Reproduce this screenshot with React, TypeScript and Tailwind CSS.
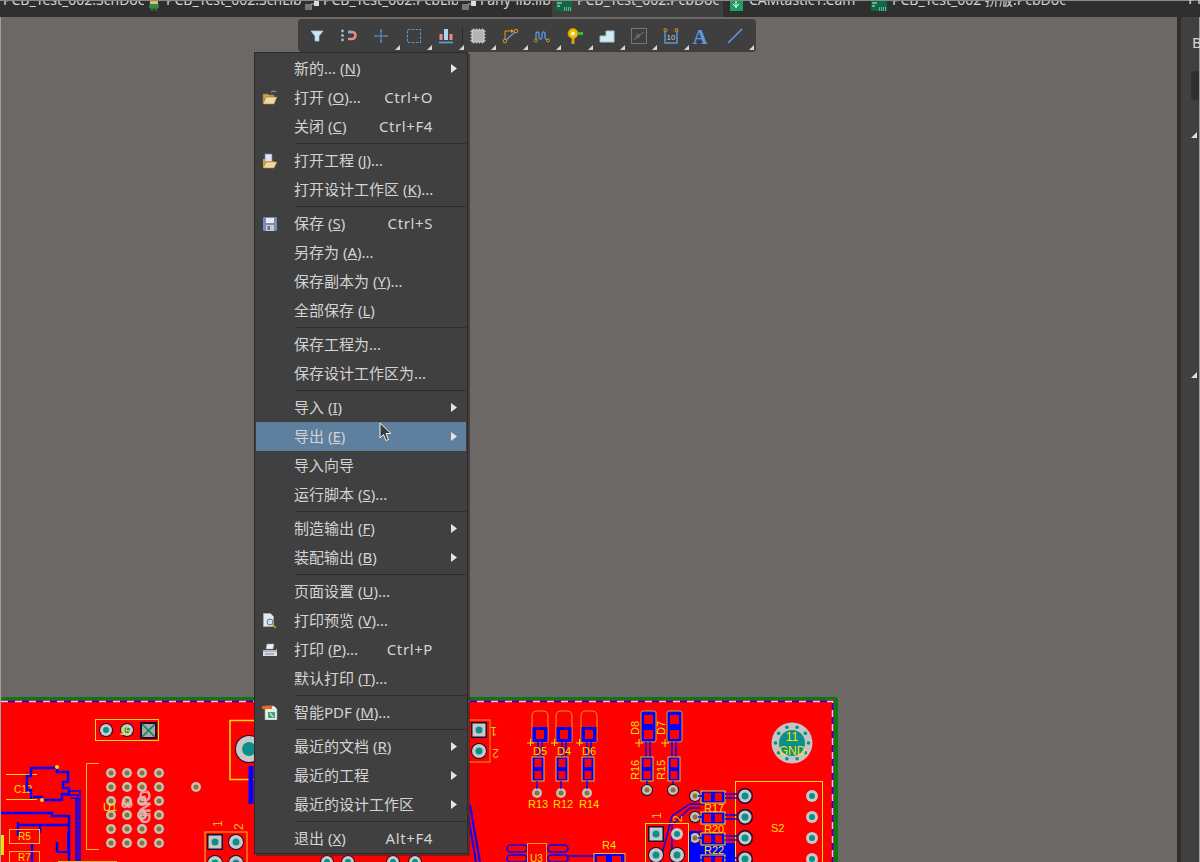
const tabs = [
  { label: "PCB_Test_002.SchDoc", box: "w-[144px] pl-[3px]", iconBox: "", icon: null },
  { label: "PCB_Test_002.SchLib", box: "w-[157px] pl-[4px]", iconBox: "w-[18px]", icon: "sch" },
  { label: "PCB_Test_002.PcbLib", box: "w-[157px] pl-[4px]", iconBox: "w-[18px]", icon: "lib" },
  { label: "Fany-lib.lib", box: "w-[94px] pl-[4px]", iconBox: "w-[18px]", icon: "lib" },
  { label: "PCB_Test_002.PcbDoc", box: "w-[171px] pl-[4px] bg-[#3f3f3f]", iconBox: "w-[21px]", icon: "pcb" },
  { label: "CAMtastic1.Cam", box: "w-[144px] pl-[7px]", iconBox: "w-[19px]", icon: "cam" },
  { label: "PCB_Test_002 拼版.PcbDoc", box: "w-[300px] pl-[4px]", iconBox: "w-[21px]", icon: "pcb" },
];

type MenuRow = {
  label: string;
  key?: string;
  tail?: string;
  shortcut?: string;
  arrow?: boolean;
  icon?: string;
  hover?: boolean;
};

const menuGroups: MenuRow[][] = [
  [
    { label: "新的... (", key: "N", tail: ")", arrow: true },
    { label: "打开 (", key: "O", tail: ")...", shortcut: "Ctrl+O", icon: "open" },
    { label: "关闭 (", key: "C", tail: ")", shortcut: "Ctrl+F4" },
  ],
  [
    { label: "打开工程 (", key: "J", tail: ")...", icon: "project" },
    { label: "打开设计工作区 (", key: "K", tail: ")..." },
  ],
  [
    { label: "保存 (", key: "S", tail: ")", shortcut: "Ctrl+S", icon: "save" },
    { label: "另存为 (", key: "A", tail: ")..." },
    { label: "保存副本为 (", key: "Y", tail: ")..." },
    { label: "全部保存 (", key: "L", tail: ")" },
  ],
  [{ label: "保存工程为..." }, { label: "保存设计工作区为..." }],
  [
    { label: "导入 (", key: "I", tail: ")", arrow: true },
    { label: "导出 (", key: "E", tail: ")", arrow: true, hover: true },
    { label: "导入向导" },
    { label: "运行脚本 (", key: "S", tail: ")..." },
  ],
  [
    { label: "制造输出 (", key: "F", tail: ")", arrow: true },
    { label: "装配输出 (", key: "B", tail: ")", arrow: true },
  ],
  [
    { label: "页面设置 (", key: "U", tail: ")..." },
    { label: "打印预览 (", key: "V", tail: ")...", icon: "preview" },
    { label: "打印 (", key: "P", tail: ")...", shortcut: "Ctrl+P", icon: "print" },
    { label: "默认打印 (", key: "T", tail: ")..." },
  ],
  [{ label: "智能PDF (", key: "M", tail: ")...", icon: "pdf" }],
  [
    { label: "最近的文档 (", key: "R", tail: ")", arrow: true },
    { label: "最近的工程", arrow: true },
    { label: "最近的设计工作区", arrow: true },
  ],
  [{ label: "退出 (", key: "X", tail: ")", shortcut: "Alt+F4" }],
];

function TabIcon({ kind }: { kind: string }) {
  if (kind === "sch") {
    return (
      <svg width="12" height="10" viewBox="0 0 12 10">
        <rect x="2" y="0" width="8" height="3" fill="#d8c070" />
        <rect x="2" y="3" width="8" height="5" fill="#2f7a3a" />
        <path d="M1 4h10M1 6h10M4 8v2M8 8v2" stroke="#3f9a4a" />
      </svg>
    );
  }
  if (kind === "lib") {
    return (
      <svg width="15" height="10" viewBox="0 0 15 10">
        <rect x="0" y="3" width="7" height="6" fill="#777" />
        <rect x="9" y="0" width="5" height="5" fill="#ddd" />
        <path d="M6 3h4" stroke="#bbb" />
      </svg>
    );
  }
  if (kind === "cam") {
    return (
      <svg width="13" height="10" viewBox="0 0 13 10">
        <rect width="13" height="10" fill="#1fa060" />
        <path d="M6 0v7M3 3l3 3 3-3" stroke="#fff" fill="none" />
      </svg>
    );
  }
  return (
    <svg width="16" height="10" viewBox="0 0 16 10">
      <rect width="16" height="10" fill="#0d6a45" />
      <path d="M1 2h5M1 5h3M8 7h1M10 7h1M12 7h1M14 7h1M8 9h1M10 9h1M12 9h1M14 9h1" stroke="#d8f0e0" />
    </svg>
  );
}

function Corner() {
  return (
    <svg className="absolute bottom-[2px] right-[-2px]" width="5" height="5" viewBox="0 0 5 5">
      <path d="M5 0V5H0Z" fill="#d8d8d8" />
    </svg>
  );
}

const blue = "#5b9ade";

const toolIcons = [
  {
    corner: false,
    svg: <path d="M2 3h12l-4 5v5H6V8Z" fill="#cfe4f4" stroke="#9cc2de" strokeWidth="0.8" />,
  },
  {
    corner: false,
    svg: (
      <>
        <path d="M7 4h4a3.500 3.500 0 0 1 0 7H7" fill="none" stroke="#e88890" strokeWidth="2.600" />
        <path d="M7 4h4" stroke="#7ab0e0" strokeWidth="2.600" />
        <circle cx="1.500" cy="3" r="1.400" fill="#9fb8cc" />
        <circle cx="1.500" cy="7.500" r="1.400" fill="#9fb8cc" />
        <circle cx="1.500" cy="12" r="1.400" fill="#9fb8cc" />
      </>
    ),
  },
  {
    corner: true,
    svg: (
      <>
        <path d="M8 1v14M1 8h14" stroke={blue} strokeWidth="1" />
        <path d="M7 3h2M7 13h2M3 7v2M13 7v2" stroke={blue} strokeWidth="0.800" />
      </>
    ),
  },
  {
    corner: true,
    svg: <rect x="1.500" y="1.500" width="13" height="13" fill="none" stroke={blue} strokeWidth="1.100" strokeDasharray="2.500 1.500" />,
  },
  {
    corner: true,
    svg: (
      <>
        <rect x="1.500" y="6" width="3" height="6" fill="#e88890" />
        <rect x="6" y="1" width="4" height="11" fill="#a9d6ee" />
        <rect x="11.500" y="6" width="3" height="6" fill="#e88890" />
        <path d="M1 14.500h14" stroke={blue} strokeWidth="1.800" />
      </>
    ),
  },
  {
    corner: true,
    svg: (
      <>
        <path d="M0 3.500h16M0 6.500h16M0 9.500h16M0 12.500h16M3.500 0v16M6.500 0v16M9.500 0v16M12.500 0v16" stroke="#88b4c8" strokeWidth="0.800" />
        <rect x="2" y="2" width="12" height="12" fill="#b4b4b4" stroke="#dcdcdc" />
      </>
    ),
  },
  {
    corner: true,
    svg: (
      <>
        <path d="M3 11V3h6" fill="none" stroke="#e0a020" />
        <path d="M9 1l3 2-3 2Z" fill="#e0a020" />
        <path d="M4 12L13 4" stroke={blue} strokeWidth="1.400" />
        <circle cx="3" cy="13" r="1.800" fill="none" stroke="#d89a20" />
        <circle cx="14" cy="3" r="1.800" fill="none" stroke="#d89a20" />
      </>
    ),
  },
  {
    corner: true,
    svg: (
      <>
        <path d="M2 11V6q0-2 1.500-2T5 6v4q0 1 1.500 1T8 10V6q0-2 1.500-2T11 6v4q0 1 2 2" fill="none" stroke={blue} strokeWidth="1.300" />
        <circle cx="1.800" cy="12.500" r="1.500" fill="none" stroke="#d89a20" />
        <circle cx="14" cy="12.500" r="1.500" fill="none" stroke="#d89a20" />
      </>
    ),
  },
  {
    corner: true,
    svg: (
      <>
        <circle cx="6" cy="5.500" r="5" fill="#f0c000" stroke="#c89000" strokeWidth="0.800" />
        <circle cx="6" cy="5.500" r="1.800" fill="#fff" />
        <rect x="4.500" y="10" width="3" height="6" fill="#e0a010" />
        <rect x="10.500" y="4" width="5.500" height="3" fill="#40b040" />
      </>
    ),
  },
  {
    corner: true,
    svg: <path d="M1 8h6V3h8v11H1Z" fill="#d4e8f0" stroke="#9fc6dc" />,
  },
  {
    corner: true,
    svg: (
      <>
        <rect x="0.500" y="0.500" width="15" height="15" fill="none" stroke="#777" />
        <path d="M3 12l3-3M6 9l4-3M10 6l3-2" stroke="#666" strokeWidth="1.200" />
        <circle cx="7" cy="8" r="1.500" fill="none" stroke="#777" />
      </>
    ),
  },
  {
    corner: true,
    svg: (
      <>
        <path d="M2 3v12h12V3" fill="none" stroke={blue} strokeWidth="1.400" />
        <circle cx="2.500" cy="2" r="1.500" fill="none" stroke="#d89a20" />
        <circle cx="13.500" cy="2" r="1.500" fill="none" stroke="#d89a20" />
        <text x="3.500" y="12" fontSize="8" fill="#c8c8c8" fontFamily="Liberation Sans, sans-serif">10</text>
      </>
    ),
  },
  {
    corner: false,
    svg: (
      <text x="-2.500" y="15.500" fontSize="21" fontWeight="700" fill={blue} fontFamily="Liberation Serif, serif">A</text>
    ),
  },
  {
    corner: true,
    svg: <path d="M0 15L14 1" stroke={blue} strokeWidth="1.600" />,
  },
];

function MenuIcon({ kind }: { kind: string }) {
  if (kind === "open") {
    return (
      <svg width="16" height="15" viewBox="0 0 16 15">
        <path d="M1 4h5l1 1h5v2H4L1 14Z" fill="#caa45a" stroke="#8a6a30" strokeWidth="0.600" />
        <path d="M4 7h11l-3 7H1Z" fill="#f0d9a0" stroke="#a88040" strokeWidth="0.600" />
        <path d="M9 2q3-2 5 0" fill="none" stroke="#9ab" />
      </svg>
    );
  }
  if (kind === "project") {
    return (
      <svg width="16" height="16" viewBox="0 0 16 16">
        <rect x="3" y="1" width="7" height="8" fill="#dfe6f0" stroke="#6f85a5" strokeWidth="0.700" />
        <path d="M1 6h2v2h9v1H4L1 15Z" fill="#caa45a" />
        <path d="M4 9h11l-3 6H1Z" fill="#f0d9a0" stroke="#a88040" strokeWidth="0.600" />
      </svg>
    );
  }
  if (kind === "save") {
    return (
      <svg width="14" height="14" viewBox="0 0 14 14">
        <rect width="14" height="14" rx="1" fill="#7c88b8" />
        <rect x="3" y="1" width="8" height="5" fill="#e8eaf2" />
        <rect x="3" y="8" width="8" height="6" fill="#c4c8d8" />
        <rect x="4.500" y="9" width="2.500" height="4" fill="#6a7098" />
      </svg>
    );
  }
  if (kind === "preview") {
    return (
      <svg width="14" height="16" viewBox="0 0 14 16">
        <path d="M0.500 0.500h7l3 3v10h-10Z" fill="#e4e8ee" stroke="#a8b0bc" strokeWidth="0.700" />
        <circle cx="7" cy="9" r="3" fill="#cfe0ee" stroke="#5a7080" />
        <path d="M9 11l4 4" stroke="#c09840" strokeWidth="1.600" />
      </svg>
    );
  }
  if (kind === "print") {
    return (
      <svg width="16" height="14" viewBox="0 0 16 14">
        <path d="M5 1h7l-1 5H4Z" fill="#eef0f4" stroke="#9aa" strokeWidth="0.500" />
        <path d="M1 7h13l1-2v6H1Z" fill="#aeb6c4" />
        <rect x="1" y="9" width="14" height="4" fill="#d8dce4" />
        <path d="M3 11h9" stroke="#7a8494" />
      </svg>
    );
  }
  return (
    <svg width="16" height="15" viewBox="0 0 16 15">
      <path d="M3 1h9l3 3v11H3Z" fill="#e6ece8" stroke="#9aa8a0" strokeWidth="0.600" />
      <path d="M6 7h7v6H6Z" fill="#3ca878" />
      <path d="M8 8l3 4" stroke="#e6f4ec" strokeWidth="1.200" />
      <rect x="0" y="1" width="10" height="3" fill="#e86a20" />
    </svg>
  );
}

function MenuItem({ row }: { row: MenuRow }) {
  return (
    <div className={`relative flex h-[29px] items-center pl-[38px] pr-[33px] ${row.hover ? "bg-[#5f7f9f]" : ""}`}>
      {row.icon && (
        <span className="absolute left-[5px] top-0 flex h-full w-[18px] items-center justify-center">
          <MenuIcon kind={row.icon} />
        </span>
      )}
      <span className="whitespace-pre">
        {row.label}
        {row.key && <u>{row.key}</u>}
        {row.tail}
      </span>
      {row.shortcut && <span className="ml-auto tracking-[0.6px]">{row.shortcut}</span>}
      {row.arrow && (
        <svg className="absolute left-[195px] top-[10px]" width="6" height="9" viewBox="0 0 6 9">
          <path d="M0 0l6 4.500L0 9Z" fill="#e4e4e4" />
        </svg>
      )}
    </div>
  );
}

function Pad({ x, y, r = 6 }: { x: number; y: number; r?: number }) {
  return (
    <g>
      <circle cx={x} cy={y} r={r + 1} fill="#1a0a30" />
      <circle cx={x} cy={y} r={r} fill="#c8c8c8" />
      <circle cx={x} cy={y} r={r * 0.5} fill="#0a9088" />
    </g>
  );
}

function SquarePad({ x, y }: { x: number; y: number }) {
  return (
    <g>
      <rect x={x - 8} y={y - 8} width="16" height="16" fill="#1a0a30" />
      <rect x={x - 6.500} y={y - 6.500} width="13" height="13" fill="#c8c8c8" />
      <circle cx={x} cy={y} r="3.500" fill="#0a9088" />
    </g>
  );
}

function Hole({ x, y }: { x: number; y: number }) {
  return (
    <g>
      <circle cx={x} cy={y} r="5" fill="#c4c0b8" />
      <circle cx={x} cy={y} r="2.500" fill="#8a7430" />
    </g>
  );
}

function Led({ x, label }: { x: number; label: string }) {
  return (
    <g>
      <path d={`M${x} 742V716q0-5 5-5h6q5 0 5 5v26Z`} fill="none" stroke="#e8a018" />
      <rect x={x + 0.500} y={727} width="15" height="15" fill="#0000ff" />
      <rect x={x + 4} y={730} width="8" height="9" fill="#ff0000" />
      <path d={`M${x - 5} 743h7M${x - 1.500} 739v7`} stroke="#ffe000" />
      <path d={`M${x + 6} 742v15M${x + 10} 742v15`} stroke="#0000ff" strokeWidth="1.500" />
      <text x={x + 1} y={755} fontSize="11" fill="#ffe000">{label}</text>
    </g>
  );
}

function Resistor({ x, y, w = 12 }: { x: number; y: number; w?: number }) {
  return (
    <g>
      <rect x={x} y={y} width={w} height="24" fill="#0000ff" stroke="#e8c020" />
      <rect x={x + 2.500} y={y + 2} width={w - 5} height="8" fill="#ff0000" />
      <rect x={x + 2.500} y={y + 14} width={w - 5} height="8" fill="#ff0000" />
    </g>
  );
}

function HorizontalRes({ x, y, label }: { x: number; y: number; label: string }) {
  return (
    <g>
      <rect x={x} y={y} width="24" height="12" fill="#0000ff" stroke="#ffe000" />
      <rect x={x + 3} y={y + 2} width="7" height="8" fill="#ff0000" />
      <rect x={x + 14} y={y + 2} width="7" height="8" fill="#ff0000" />
      <path d={`M${x - 3} ${y + 5}h4M${x + 24} ${y + 3}h12M${x + 24} ${y + 7}h12`} stroke="#0000ff" strokeWidth="1.500" />
      {label && <text x={x + 3} y={y + 21} fontSize="11" fill="#ffe000">{label}</text>}
    </g>
  );
}

function PcbBoard() {
  const gridX = [111, 127, 142, 159];
  const gridY = [773, 787, 801, 815, 829, 843];

  return (
    <svg className="block shrink-0" width="1176" height="165" viewBox="1 697 1176 165" fontFamily="Liberation Sans, sans-serif">
      <rect x="1" y="697" width="837" height="170" rx="3" fill="#0a7a10" />
      <rect x="1" y="700" width="833" height="167" fill="#ff0000" />
      <path d="M1 701.500H832.500V862" fill="none" stroke="#0000ff" strokeWidth="1.500" />
      <path d="M1 701.500H832.500V862" fill="none" stroke="#d8d8d8" strokeWidth="1.500" strokeDasharray="7 7" />

      <rect x="95.500" y="719.500" width="63" height="21" fill="none" stroke="#ffe000" />
      <Pad x={106} y={730} r={6} />
      <Pad x={127} y={730} r={6} />
      <rect x="140" y="722" width="17" height="17" fill="#1a0a30" />
      <rect x="142" y="724" width="13" height="13" fill="#a8a8a0" />
      <path d="M142 724l13 13M155 724l-13 13" stroke="#0a7a70" strokeWidth="1.500" />
      <text x="120" y="735" fontSize="10" fill="#ffe000">J5</text>

      <rect x="230" y="720.500" width="40" height="59" fill="none" stroke="#ffe000" strokeWidth="1.500" />
      <circle cx="249" cy="749" r="14" fill="#1a0a30" />
      <circle cx="249" cy="749" r="13" fill="#c8c8c8" />
      <circle cx="249" cy="749" r="7" fill="#0a9088" />
      <path d="M251 766v38" stroke="#0000ff" strokeWidth="5" />

      <path d="M99 763.500H86.500V849.500H99" fill="none" stroke="#e8c020" />
      {gridX.map((x) => gridY.map((y) => <Hole key={`${x}:${y}`} x={x} y={y} />))}
      <Hole x={196} y={787} />
      <text x="103" y="811" fontSize="11" fill="#ffe000">U1</text>
      <text x="0" y="0" fontSize="15" fill="none" stroke="#f6b0b0" transform="translate(140 790) rotate(90)">GND</text>
      <text x="0" y="0" fontSize="15" fill="none" stroke="#f6b0b0" transform="translate(122 800) rotate(90)">3</text>

      <path d="M6 774.500H37M6 799.500H37" stroke="#ffe000" />
      <text x="14" y="793" fontSize="10" fill="#ffe000">C12</text>
      <path
        d="M31 799V790H27V776H31V768H57V772H68V782H63V788H69V794H62V800H42V797H33"
        fill="none"
        stroke="#0000ff"
        strokeWidth="2.500"
      />
      <circle cx="57" cy="767" r="2" fill="#ffe000" />
      <circle cx="42" cy="800" r="2" fill="#ffe000" />
      <path d="M1 813H52V816H69V862" fill="none" stroke="#0000ff" strokeWidth="2.500" />
      <path d="M68 791H80V862M64 795H78V862M70 798H76V862" fill="none" stroke="#0000ff" strokeWidth="1.500" />
      <path d="M40 833V825H69M18 825H45M18 822V836M57 842V852M32 862V844" fill="none" stroke="#0000ff" strokeWidth="2.500" />
      <path d="M57 852H68V832" fill="none" stroke="#0000ff" strokeWidth="2" />
      <rect x="9.500" y="829.500" width="30" height="14" fill="none" stroke="#e8c020" />
      <text x="18" y="840" fontSize="10" fill="#ffe000">R5</text>
      <rect x="9.500" y="851.500" width="30" height="14" fill="none" stroke="#e8c020" />
      <text x="18" y="861" fontSize="10" fill="#ffe000">R7</text>
      <rect x="1" y="835" width="3" height="20" fill="#ffe000" />
      <path d="M58 861.500H117" stroke="#e8c020" />

      <rect x="205" y="832" width="42" height="40" fill="none" stroke="#e8c020" />
      <SquarePad x={215} y={842} />
      <Pad x={236} y={842} r={7} />
      <Pad x={215} y={863} r={7} />
      <Pad x={236} y={863} r={7} />
      <text x="0" y="0" fontSize="12" fill="#e8c020" transform="translate(222 827) rotate(-90)">1</text>
      <text x="0" y="0" fontSize="12" fill="#e8c020" transform="translate(243 830) rotate(-90)">2</text>

      <path d="M470 805L480 862M468 815L476 862" stroke="#0000ff" strokeWidth="2" />
      <rect x="468" y="720" width="22" height="42" fill="none" stroke="#e8a018" />
      <SquarePad x={479} y={730} />
      <Pad x={479} y={751} r={7} />
      <text x="0" y="0" fontSize="12" fill="#e8c020" transform="translate(497 727) rotate(180)">1</text>
      <text x="0" y="0" fontSize="12" fill="#e8c020" transform="translate(499 749) rotate(180)">2</text>
      <Pad x={327} y={862} r={6} />
      <Pad x={348} y={862} r={6} />
      <Pad x={393} y={862} r={6} />
      <Pad x={415} y={862} r={6} />

      <Led x={532} label="D5" />
      <Led x={556} label="D4" />
      <Led x={581} label="D6" />
      <Resistor x={532} y={757} />
      <Resistor x={556} y={757} />
      <Resistor x={582} y={757} />
      <Hole x={537} y={793} />
      <Hole x={561} y={793} />
      <Hole x={587} y={793} />
      <path d="M537 781v8M561 781v8M587 781v8" stroke="#0000ff" strokeWidth="1.500" />
      <text x="528" y="808" fontSize="11" fill="#ffe000">R13</text>
      <text x="553" y="808" fontSize="11" fill="#ffe000">R12</text>
      <text x="579" y="808" fontSize="11" fill="#ffe000">R14</text>

      <rect x="641" y="711" width="15" height="31" rx="2" fill="#0000ff" stroke="#e8a018" />
      <rect x="644" y="715" width="9" height="9" fill="#ff0000" />
      <rect x="644" y="730" width="9" height="9" fill="#ff0000" />
      <rect x="667" y="711" width="15" height="31" rx="2" fill="#0000ff" stroke="#e8a018" />
      <rect x="670" y="715" width="9" height="9" fill="#ff0000" />
      <rect x="670" y="730" width="9" height="9" fill="#ff0000" />
      <path d="M646 742v15M650 742v15M672 742v15M676 742v15" stroke="#0000ff" strokeWidth="1.500" />
      <path d="M635 743h8M639 739v8M661 743h8M665 739v8" stroke="#ffe000" />
      <text x="0" y="0" fontSize="11" fill="#ffe000" transform="translate(639 735) rotate(-90)">D8</text>
      <text x="0" y="0" fontSize="11" fill="#ffe000" transform="translate(665 735) rotate(-90)">D7</text>
      <Resistor x={641} y={757} />
      <Resistor x={668} y={757} />
      <text x="0" y="0" fontSize="11" fill="#ffe000" transform="translate(639 780) rotate(-90)">R16</text>
      <text x="0" y="0" fontSize="11" fill="#ffe000" transform="translate(665 780) rotate(-90)">R15</text>
      <path d="M647 781v5M673 781v5" stroke="#0000ff" strokeWidth="1.500" />
      <circle cx="647" cy="790" r="6" fill="#1a0a30" />
      <Hole x={647} y={790} />
      <circle cx="673" cy="790" r="6" fill="#1a0a30" />
      <Hole x={673} y={790} />

      <circle cx="792" cy="743" r="20.500" fill="#c4c4c4" />
      <circle cx="792" cy="743" r="13" fill="#0a9088" />
      {[0, 36, 72, 108, 144, 180, 216, 252, 288, 324].map((deg) => (
        <circle
          key={deg}
          cx={792 + 16.500 * Math.cos((deg * Math.PI) / 180)}
          cy={743 + 16.500 * Math.sin((deg * Math.PI) / 180)}
          r="1.800"
          fill="#0a9088"
        />
      ))}
      <text x="792" y="741" fontSize="12" textAnchor="middle" fill="#ffe000">11</text>
      <text x="792" y="755" fontSize="12" textAnchor="middle" fill="#ffe000">GND</text>

      <rect x="735.500" y="781.500" width="87" height="90" fill="none" stroke="#ffe000" />
      <text x="771" y="832" fontSize="11" fill="#ffe000">S2</text>
      {[796, 817, 838, 859].map((y) => (
        <g key={y}>
          <circle cx="745" cy={y} r="8" fill="#1a0a30" />
          <circle cx="745" cy={y} r="6.500" fill="#c8c8c8" />
          <circle cx="745" cy={y} r="3.500" fill="#0a9088" />
          <circle cx="812" cy={y} r="6" fill="#c8c8c8" />
          <circle cx="812" cy={y} r="3" fill="#0a9088" />
          <circle cx="695" cy={y} r="6" fill="#1a0a30" />
          <Hole x={695} y={y} />
        </g>
      ))}

      <path d="M672 862V825L690 808H700M660 862L672 816L690 804H705" fill="none" stroke="#0000ff" strokeWidth="1.500" />
      <path d="M690 862V832H702" fill="none" stroke="#0000ff" strokeWidth="2" />
      <path d="M690 843H735V862H690Z" fill="#0000ff" />
      <HorizontalRes x={701} y={791} label="R17" />
      <HorizontalRes x={701} y={812} label="R20" />
      <HorizontalRes x={701} y={833} label="R22" />
      <HorizontalRes x={701} y={855} label="" />

      <rect x="645.500" y="823.500" width="43" height="45" fill="none" stroke="#ffe000" />
      <SquarePad x={656} y={834} />
      <circle cx="677" cy="834" r="6" fill="#c8c8c8" />
      <circle cx="677" cy="834" r="3" fill="#0a9088" />
      <Pad x={656} y={855} r={7} />
      <Pad x={677} y={855} r={7} />
      <text x="0" y="0" fontSize="12" fill="#e8c020" transform="translate(661 819) rotate(-90)">1</text>
      <text x="0" y="0" fontSize="12" fill="#e8c020" transform="translate(682 822) rotate(-90)">2</text>

      <rect x="507" y="845" width="20" height="7" rx="3.500" fill="#ff0000" stroke="#0000ff" strokeWidth="1.500" />
      <rect x="507" y="855" width="20" height="7" rx="3.500" fill="#ff0000" stroke="#0000ff" strokeWidth="1.500" />
      <rect x="548" y="845" width="20" height="7" rx="3.500" fill="#ff0000" stroke="#0000ff" strokeWidth="1.500" />
      <rect x="548" y="855" width="20" height="7" rx="3.500" fill="#ff0000" stroke="#0000ff" strokeWidth="1.500" />
      <rect x="527.500" y="843.500" width="19" height="30" fill="#ff0000" stroke="#e8a018" />
      <text x="530" y="862" fontSize="10" fill="#ffe000">U3</text>
      <path d="M567 856h27" stroke="#0000ff" strokeWidth="1.500" />
      <rect x="594" y="853.500" width="31" height="14" fill="#0000ff" stroke="#e8c020" />
      <rect x="597" y="856" width="9" height="9" fill="#ff0000" />
      <rect x="612" y="856" width="9" height="9" fill="#ff0000" />
      <text x="602" y="849" fontSize="11" fill="#ffe000">R4</text>
    </svg>
  );
}

export default function App() {
  return (
    <div
      className="relative flex h-[862px] w-[1200px] flex-col overflow-hidden bg-[#2f2f2f] text-[15px] text-[#d4d4d4]"
      style={{ fontFamily: '"Noto Sans", "Noto Sans CJK SC", sans-serif' }}
    >
      <div className="flex h-[17px] shrink-0 items-end overflow-hidden border-t border-[#8a8a8a] text-[14px]">
        {tabs.map((tab) => (
          <div key={tab.label} className={`flex h-[17px] shrink-0 items-end overflow-hidden ${tab.box}`}>
            {tab.icon && (
              <span className={`mb-[6px] shrink-0 ${tab.iconBox}`}>
                <TabIcon kind={tab.icon} />
              </span>
            )}
            <span className="mb-[7px] whitespace-pre leading-[20px]">{tab.label}</span>
          </div>
        ))}
      </div>

      <div className="flex min-h-0 flex-1">
        <div className="w-px bg-[#a0a0a0]" />
        <div className="flex min-w-0 flex-1 flex-col justify-end bg-[#6c6866]">
          <PcbBoard />
        </div>
        <div className="w-[4px] bg-[#2f2f2f]" />
        <div className="relative w-[18px] bg-[#404040]" />
        <div className="w-px bg-[#a0a0a0]" />
      </div>

      <span className="absolute left-[1192px] top-[31px] text-[15px] text-[#d8d8d8]">B</span>
      <span className="absolute left-[1188px] top-[-13px] text-[15px] text-[#d8d8d8]">Pr</span>
      <div className="absolute left-[1191px] top-[71px] h-[29px] w-[8px] rounded-l bg-[#2f2f2f]" />
      <svg className="absolute left-[1191px] top-[132px]" width="6" height="6" viewBox="0 0 6 6">
        <path d="M6 0V6H0Z" fill="#e0e0e0" />
      </svg>
      <svg className="absolute left-[1191px] top-[372px]" width="6" height="6" viewBox="0 0 6 6">
        <path d="M6 0V6H0Z" fill="#e0e0e0" />
      </svg>

      <div className="absolute left-[298px] top-[19px] flex h-[33px] w-[458px] items-center rounded-[4px] bg-[#3f3f3f] pl-[3px]">
        {toolIcons.map((tool, index) => (
          <div key={index} className="flex items-center">
            {index === 5 && <div className="mr-[-1px] h-[17px] w-px bg-[#2a2a2a]" />}
            <div className="relative flex h-[33px] w-[32.2px] items-center justify-center">
              <svg width="16" height="16" viewBox="0 0 16 16" className="overflow-visible">
                {tool.svg}
              </svg>
              {tool.corner && <Corner />}
            </div>
          </div>
        ))}
      </div>

      <div className="absolute left-[254px] top-[52px] w-[214px] border border-[#2a2a2a] bg-[#404040] pt-[1px] pl-[1px] pr-[1px] shadow-[2px_2px_0_rgba(60,45,45,0.7)]">
        {menuGroups.map((group, groupIndex) => (
          <div key={groupIndex}>
            {groupIndex > 0 && (
              <div className="flex h-[5px] items-center pl-[39px]">
                <div className="h-px w-full bg-[#2c2c2c]" />
              </div>
            )}
            {group.map((row) => (
              <MenuItem key={row.label + (row.key ?? "")} row={row} />
            ))}
          </div>
        ))}
      </div>

      <svg className="absolute left-[379px] top-[422px]" width="14" height="20" viewBox="0 0 14 20">
        <path d="M1 1V16L4.500 12.500L7 18.500L9.500 17.500L7 11.500H12Z" fill="#3a3a3a" stroke="#f4f4f4" strokeWidth="1" />
      </svg>
    </div>
  );
}
